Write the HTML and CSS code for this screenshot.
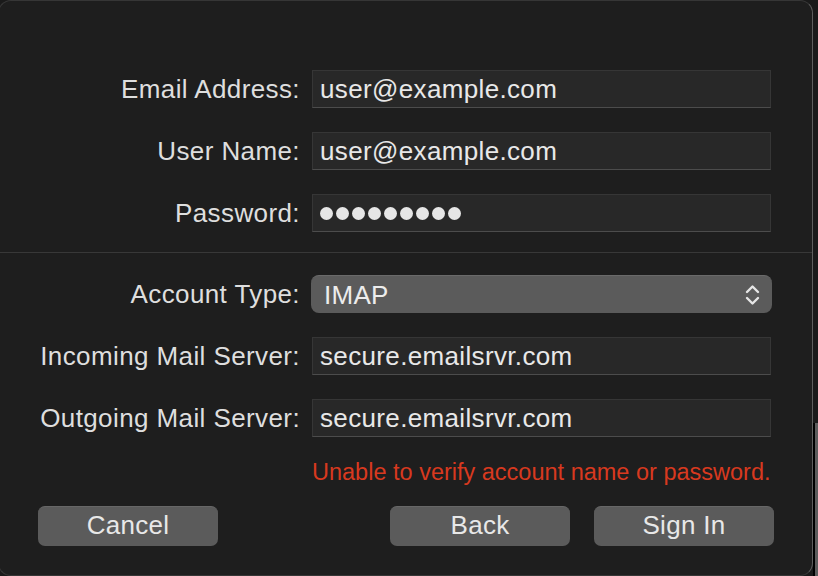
FILE: index.html
```html
<!DOCTYPE html>
<html lang="en">
<head>
  <meta charset="UTF-8" />
  <title>Mail Account Setup</title>
  <meta name="viewport" content="width=device-width, initial-scale=1.0" />
  <link rel="stylesheet" href="styles.css">
</head>
<body>
  <div class="behind"></div>

  <div class="window">
    <div class="group first">
      <div class="label">Email Address:</div>
      <div class="field">user@example.com</div>

      <div class="label">User Name:</div>
      <div class="field">user@example.com</div>

      <div class="label">Password:</div>
      <div class="field dots">
        <span></span><span></span><span></span><span></span><span></span><span></span><span></span><span></span><span></span>
      </div>
    </div>

    <div class="separator"></div>

    <div class="group second">
      <div class="label">Account Type:</div>
      <div class="popup">
        <span>IMAP</span>
        <svg class="chevrons" width="15" height="24" viewBox="0 0 15 24">
          <path d="M2 9 L7.5 3.5 L13 9" />
          <path d="M2 15 L7.5 20.5 L13 15" />
        </svg>
      </div>

      <div class="label">Incoming Mail Server:</div>
      <div class="field">secure.emailsrvr.com</div>

      <div class="label">Outgoing Mail Server:</div>
      <div class="field">secure.emailsrvr.com</div>

      <div></div>
      <div class="error">Unable to verify account name or password.</div>
    </div>

    <div class="buttons">
      <button>Cancel</button>
      <button class="back">Back</button>
      <button>Sign In</button>
    </div>
  </div>
</body>
</html>
```

FILE: styles.css
```css
html, body {
  height: 576px;
}
body {
  margin: 0;
  background: #1a1a1a;
  font-family: "Liberation Sans", Arial, sans-serif;
  overflow: hidden;
}
.behind {
  position: absolute;
  left: 813px;
  top: 423px;
  width: 5px;
  height: 153px;
  background: #5c5c5c;
  border-left: 2px solid #000;
}
.window {
  position: relative;
  margin-left: -2px;
  width: 815px;
  height: 576px;
  box-sizing: border-box;
  background: #1e1e1e;
  border: 1px solid #363636;
  border-right-color: #5e5e5e;
  border-radius: 13px;
}
.group {
  display: grid;
  grid-template-columns: 301px 459px;
  column-gap: 12px;
  row-gap: 24px;
  align-items: center;
}
.group.first {
  padding-top: 69px;
}
.group.second {
  padding-top: 22px;
}
.separator {
  margin-top: 20px;
  height: 1px;
  background: #383838;
}
.label {
  text-align: right;
  font-size: 26px;
  line-height: 36px;
  letter-spacing: 0.4px;
  color: #dedede;
  white-space: nowrap;
}
.field {
  height: 38px;
  box-sizing: border-box;
  padding: 0 7px;
  background: #282828;
  border: 1px solid #363636;
  border-bottom-color: #4c4c4c;
  font-size: 26px;
  line-height: 36px;
  letter-spacing: 0.35px;
  color: #e8e8e8;
  white-space: nowrap;
}
.dots {
  display: flex;
  align-items: center;
  gap: 3px;
}
.dots span {
  width: 13px;
  height: 13px;
  border-radius: 50%;
  background: #e6e6e6;
}
.popup {
  height: 38px;
  box-sizing: border-box;
  margin: 0 -1px;
  padding: 0 12px 0 13px;
  display: flex;
  align-items: center;
  justify-content: space-between;
  background: #5b5b5b;
  border-top: 1px solid #6a6a6a;
  border-radius: 8px;
  font-size: 26px;
  line-height: 36px;
  letter-spacing: 0.3px;
  color: #ececec;
}
.chevrons path {
  fill: none;
  stroke: #e6e6e6;
  stroke-width: 2.4;
  stroke-linecap: round;
  stroke-linejoin: round;
}
.error {
  text-align: right;
  padding-right: 1px;
  font-size: 23.5px;
  line-height: 22px;
  color: #d8391f;
  white-space: nowrap;
}
.buttons {
  display: flex;
  gap: 24px;
  margin-top: 23px;
  padding: 0 38px 0 39px;
}
.buttons button {
  width: 180px;
  height: 40px;
  padding: 0 0 3px;
  border: none;
  border-top: 1px solid #676767;
  border-radius: 7px;
  background: #5b5b5b;
  font-family: inherit;
  font-size: 26px;
  line-height: 36px;
  letter-spacing: 0.3px;
  color: #e8e8e8;
}
.buttons .back {
  margin-left: auto;
}
```
